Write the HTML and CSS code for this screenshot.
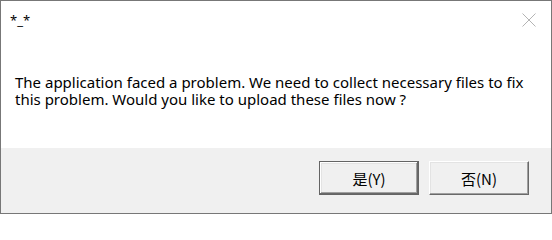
FILE: index.html
```html
<!DOCTYPE html>
<html>
<head>
<meta charset="utf-8">
<link rel="stylesheet" href="styles.css">
</head>
<body>
<div class="dialog">
  <div class="main">
    <div class="titlebar">
      <span class="title">*_*</span>
      <span class="close">
        <svg width="14" height="14" viewBox="0 0 14 14"><path d="M0.5 0.5 L13.5 13.5 M13.5 0.5 L0.5 13.5" stroke="#b4b4b4" stroke-width="1" fill="none"/></svg>
      </span>
    </div>
    <p class="message">The application faced a problem. We need to collect necessary files to fix<br>this problem. Would you like to upload these files now ?</p>
  </div>
  <div class="footer">
    <button class="btn default">是(Y)</button>
    <button class="btn">否(N)</button>
  </div>
</div>
</body>
</html>
```
FILE: styles.css
```css
html, body {
  margin: 0;
  padding: 0;
  background: #ffffff;
}
.dialog {
  width: 552px;
  height: 214px;
  box-sizing: border-box;
  border: 1px solid #777777;
  display: flex;
  flex-direction: column;
  font-family: "Noto Sans", "Noto Sans CJK SC", sans-serif;
  color: #000;
}
.main {
  height: 147px;
  background: #ffffff;
}
.titlebar {
  display: flex;
  justify-content: space-between;
  align-items: flex-start;
  height: 34px;
  padding: 0 15px 0 9px;
}
.title {
  font-size: 13px;
  line-height: 16px;
  margin-top: 11px;
}
.close {
  display: block;
  width: 14px;
  height: 14px;
  margin-top: 12px;
}
.close svg {
  display: block;
}
.message {
  margin: 39px 0 0 14px;
  font-size: 15px;
  line-height: 17px;
}
.footer {
  flex: 1;
  background: #f0f0f0;
  display: flex;
  justify-content: flex-end;
  align-items: flex-start;
  gap: 10px;
  padding: 13px 22px 0 0;
}
.btn {
  width: 100px;
  height: 34px;
  box-sizing: border-box;
  margin: 0;
  padding: 0;
  background: #f0f0f0;
  border: 1px solid;
  border-color: #ffffff #696969 #696969 #ffffff;
  box-shadow: inset -1px -1px 0 #a0a0a0, inset 1px 1px 0 #e3e3e3;
  font-family: "Noto Sans CJK SC", "Noto Sans", sans-serif;
  font-size: 15px;
  color: #000;
}
.btn.default {
  border-color: #646464;
  box-shadow: inset -1px -1px 0 #696969, inset 1px 1px 0 #ffffff, inset -2px -2px 0 #a0a0a0, inset 2px 2px 0 #e3e3e3;
}
```
